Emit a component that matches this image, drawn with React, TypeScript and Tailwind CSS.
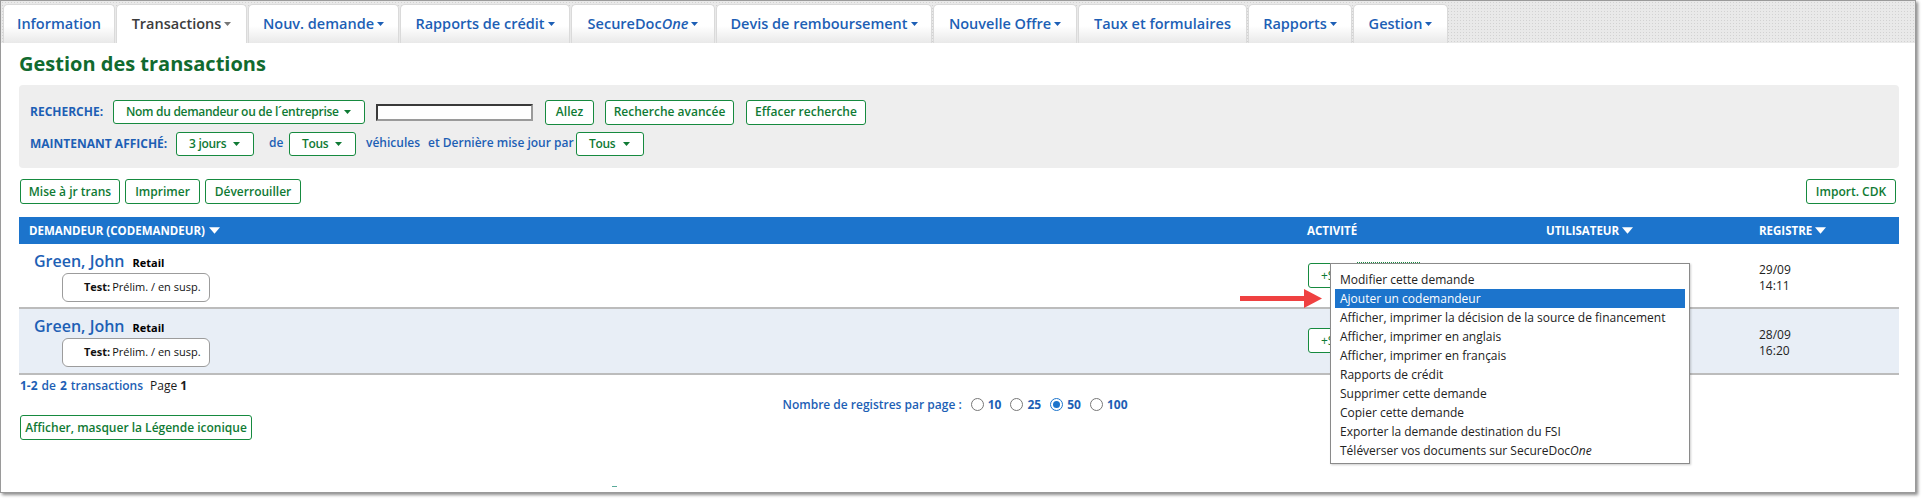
import React from 'react';

const BLUE = 'text-[#1d5fb5]';

const Caret: React.FC<{ className?: string; w?: number; h?: number }> = ({ className = '', w = 7, h = 4 }) => (
    <svg className={`shrink-0 ${className}`} width={w} height={h} viewBox="0 0 7 4">
        <path d="M0 0h7L3.5 4z" fill="currentColor" />
    </svg>
);

const TABS = [
    { label: 'Information', w: 'w-[112px]' },
    { label: 'Transactions', w: 'w-[131px]', caret: true, active: true },
    { label: 'Nouv. demande', w: 'w-[151px]', caret: true },
    { label: 'Rapports de crédit', w: 'w-[170px]', caret: true },
    { label: 'SecureDoc', italic: 'One', w: 'w-[144px]', caret: true },
    { label: 'Devis de remboursement', w: 'w-[216px]', caret: true },
    { label: 'Nouvelle Offre', w: 'w-[144px]', caret: true },
    { label: 'Taux et formulaires', w: 'w-[169px]' },
    { label: 'Rapports', w: 'w-[104px]', caret: true },
    { label: 'Gestion', w: 'w-[95px]', caret: true },
];

const MENU = [
    'Modifier cette demande',
    'Ajouter un codemandeur',
    'Afficher, imprimer la décision de la source de financement',
    'Afficher, imprimer en anglais',
    'Afficher, imprimer en français',
    'Rapports de crédit',
    'Supprimer cette demande',
    'Copier cette demande',
    'Exporter la demande destination du FSI',
];

const GreenButton: React.FC<{ children: React.ReactNode; className?: string }> = ({ children, className = '' }) => (
    <button className={`h-[25px] bg-white border border-[#168a3f] rounded-[3px] text-[12px] font-semibold text-[#0f7a34] flex items-center justify-center whitespace-nowrap ${className}`}>
        {children}
    </button>
);

const Select: React.FC<{ label: string; className?: string }> = ({ label, className = '' }) => (
    <div className={`h-[24px] bg-white border border-[#168a3f] rounded-[3px] flex items-center justify-between pl-[12px] pr-[13px] text-[12px] font-semibold text-[#0f7a34] whitespace-nowrap tracking-[-0.3px] ${className}`}>
        <span>{label}</span>
        <Caret />
    </div>
);

const Row: React.FC<{ date: string; time: string; shaded?: boolean; dotted?: boolean; h: string }> = ({ date, time, shaded, dotted, h }) => (
    <div className={`grid grid-cols-[1278px_239px_213px_1fr] border-b-2 border-[#bcbcbc] ${h} ${shaded ? 'bg-[#e8eef6]' : 'bg-white'}`}>
        <div className="pl-[15px] pt-[8px]">
            <div className="flex items-baseline h-[18px]">
                <span className={`text-[16px] leading-[18px] font-semibold ${BLUE}`}>Green, John</span>
                <span className="ml-[8px] text-[11px] font-bold text-black">Retail</span>
            </div>
            <div className="mt-[3px] ml-[28px] w-[148px] h-[29px] bg-white border border-[#9c9c9c] rounded-[6px] flex items-center pl-[21px] text-[11px] text-[#111]">
                <span className="font-bold">Test:</span>
                <span className="ml-[2px]">Prélim. / en susp.</span>
            </div>
        </div>
        <div className="pl-[11px] pt-[19px] flex items-start">
            <button className="h-[25px] w-[46px] bg-white border border-[#168a3f] rounded-[3px] text-[12px] text-[#0f7a34] pl-[12px] flex items-center">
                <span className="w-[9px] overflow-hidden whitespace-nowrap">+S</span>
            </button>
            {dotted && <div className="ml-[3px] -mt-[1px] w-[63px] h-[25px] border-t border-dotted border-[#168a3f]" />}
        </div>
        <div />
        <div className="pl-[10px] pt-[18px] text-[12px] leading-[16px] text-[#222]">
            <div>{date}</div>
            <div>{time}</div>
        </div>
    </div>
);

const Radio: React.FC<{ label: string; checked?: boolean }> = ({ label, checked }) => (
    <div className="flex items-center ml-[9px]">
        <span className={`w-[13px] h-[13px] rounded-full border flex items-center justify-center bg-white ${checked ? 'border-[#1c74cc]' : 'border-[#777]'}`}>
            {checked && <span className="w-[7px] h-[7px] rounded-full bg-[#1c74cc]" />}
        </span>
        <span className={`ml-[4px] text-[12px] font-bold ${BLUE}`}>{label}</span>
    </div>
);

export default function App() {
    return (
        <div className="w-[1927px] h-[499px] bg-white relative overflow-hidden font-['Open_Sans',sans-serif]">
            <div className="w-[1916px] h-[493px] border border-[#9a9a9a] shadow-[2px_2px_3px_rgba(0,0,0,0.45)] flex flex-col">
                {/* Tabs */}
                <div className="h-[42px] shrink-0 pt-[3px] pl-[2px] flex gap-[1px] bg-[#e9e9e9] bg-[radial-gradient(circle,#d2d2d2_0.6px,transparent_0.8px)] bg-[length:3px_3px]">
                    {TABS.map((t) => (
                        <div
                            key={t.label}
                            className={`${t.w} h-[39px] rounded-t-[5px] border border-b-0 border-[#dadada] flex items-center justify-center gap-[3px] text-[14.5px] font-semibold ${
                                t.active ? 'bg-white text-[#3c3c3c]' : 'bg-[linear-gradient(to_bottom,#ffffff_55%,#e9e9e9)] text-[#1d5fb5]'
                            }`}
                        >
                            <span>
                                {t.label}
                                {t.italic && <i>{t.italic}</i>}
                            </span>
                            {t.caret && <Caret className={t.active ? 'text-[#777]' : 'text-[#1d5fb5]'} />}
                        </div>
                    ))}
                </div>

                {/* Content */}
                <div className="flex-1 bg-white pl-[18px] pr-[16px] pt-[9px]">
                    <h1 className="text-[20px] leading-[24px] font-bold text-[#116a2f]">Gestion des transactions</h1>

                    {/* Search panel */}
                    <div className="mt-[9px] h-[83px] rounded-[4px] bg-[#eeeeee] pl-[11px] pt-[15px]">
                        <div className="flex items-center h-[24px]">
                            <span className={`w-[83px] text-[12px] font-bold ${BLUE}`}>RECHERCHE:</span>
                            <Select label="Nom du demandeur ou de l´entreprise" className="w-[252px]" />
                            <input className="ml-[11px] w-[157px] h-[17px] bg-white border-2 border-t-[#3a3a3a] border-l-[#3a3a3a] border-r-[#9a9a9a] border-b-[#9a9a9a] outline-none" />
                            <GreenButton className="ml-[12px] w-[49px] h-[24px]">Allez</GreenButton>
                            <GreenButton className="ml-[11px] w-[129px] h-[24px]">Recherche avancée</GreenButton>
                            <GreenButton className="ml-[12px] w-[120px] h-[24px]">Effacer recherche</GreenButton>
                        </div>
                        <div className="flex items-center h-[24px] mt-[8px] text-[12px] font-semibold">
                            <span className={`w-[146px] font-bold ${BLUE}`}>MAINTENANT AFFICHÉ:</span>
                            <Select label="3 jours" className="w-[78px]" />
                            <span className={`ml-[15px] w-[20px] -mt-[3px] ${BLUE}`}>de</span>
                            <Select label="Tous" className="w-[67px]" />
                            <span className={`ml-[10px] w-[62px] -mt-[3px] ${BLUE}`}>véhicules</span>
                            <span className={`w-[148px] -mt-[3px] ${BLUE}`}>et Dernière mise jour par</span>
                            <Select label="Tous" className="w-[68px]" />
                        </div>
                    </div>

                    {/* Actions */}
                    <div className="mt-[11px] flex items-center justify-between pl-[1px] pr-[3px]">
                        <div className="flex gap-[5px]">
                            <GreenButton className="w-[100px]">Mise à jr trans</GreenButton>
                            <GreenButton className="w-[75px]">Imprimer</GreenButton>
                            <GreenButton className="w-[96px]">Déverrouiller</GreenButton>
                        </div>
                        <GreenButton className="w-[90px]">Import. CDK</GreenButton>
                    </div>

                    {/* Table */}
                    <div className="mt-[13px] h-[27px] bg-[#1c74cc] grid grid-cols-[1278px_239px_213px_1fr] items-center text-white text-[11.5px] font-bold">
                        <div className="pl-[10px] flex items-center gap-[4px]">
                            DEMANDEUR (CODEMANDEUR) <Caret w={11} h={7} />
                        </div>
                        <div className="pl-[10px]">ACTIVITÉ</div>
                        <div className="pl-[10px] flex items-center gap-[3px]">
                            UTILISATEUR <Caret w={11} h={7} />
                        </div>
                        <div className="pl-[10px] flex items-center gap-[3px]">
                            REGISTRE <Caret w={11} h={7} />
                        </div>
                    </div>
                    <Row date="29/09" time="14:11" dotted h="h-[65px]" />
                    <Row date="28/09" time="16:20" shaded h="h-[66px]" />

                    {/* Footer */}
                    <div className="mt-[2px] h-[17px] flex items-center pl-[1px] text-[12px]">
                        <span className={`font-bold ${BLUE}`}>1-2</span>
                        <span className={`ml-[4px] font-semibold ${BLUE}`}>de</span>
                        <span className={`ml-[4px] font-bold ${BLUE}`}>2</span>
                        <span className={`ml-[4px] font-semibold ${BLUE}`}>transactions</span>
                        <span className="ml-[7px] text-[#1a1a1a]">Page</span>
                        <span className="ml-[3px] font-bold text-[#1a1a1a]">1</span>
                    </div>
                    <div className="mt-[2px] h-[17px] flex items-center justify-center pr-[8px]">
                        <span className={`text-[12px] font-semibold ${BLUE}`}>Nombre de registres par page :</span>
                        <Radio label="10" />
                        <Radio label="25" />
                        <Radio label="50" checked />
                        <Radio label="100" />
                    </div>
                    <GreenButton className="mt-[2px] ml-[1px] w-[232px]">Afficher, masquer la Légende iconique</GreenButton>
                </div>
            </div>

            {/* Context menu */}
            <div className="absolute left-[1330px] top-[263px] w-[360px] h-[201px] bg-white border border-[#8a8a8a] shadow-[1px_1px_2px_rgba(0,0,0,0.2)] pt-[6px] px-[4px] text-[12px] text-[#222]">
                {MENU.map((m, i) => (
                    <div key={m} className={`h-[19px] flex items-center pl-[5px] whitespace-nowrap ${i === 1 ? 'bg-[#1c74cc] text-white' : ''}`}>
                        {m}
                    </div>
                ))}
                <div className="h-[19px] flex items-center pl-[5px] whitespace-nowrap">
                    Téléverser vos documents sur SecureDoc<i>One</i>
                </div>
            </div>

            {/* Red arrow */}
            <svg className="absolute left-[1239px] top-[288px]" width="84" height="20" viewBox="0 0 84 20">
                <rect x="1" y="8" width="66" height="5" fill="#ef4141" />
                <path d="M65 1 L83 10.5 L65 20 Z" fill="#ef4141" />
            </svg>

            <div className="absolute left-[612px] top-[486px] w-[5px] h-[1px] bg-[#5aaa9a]" />
        </div>
    );
}
